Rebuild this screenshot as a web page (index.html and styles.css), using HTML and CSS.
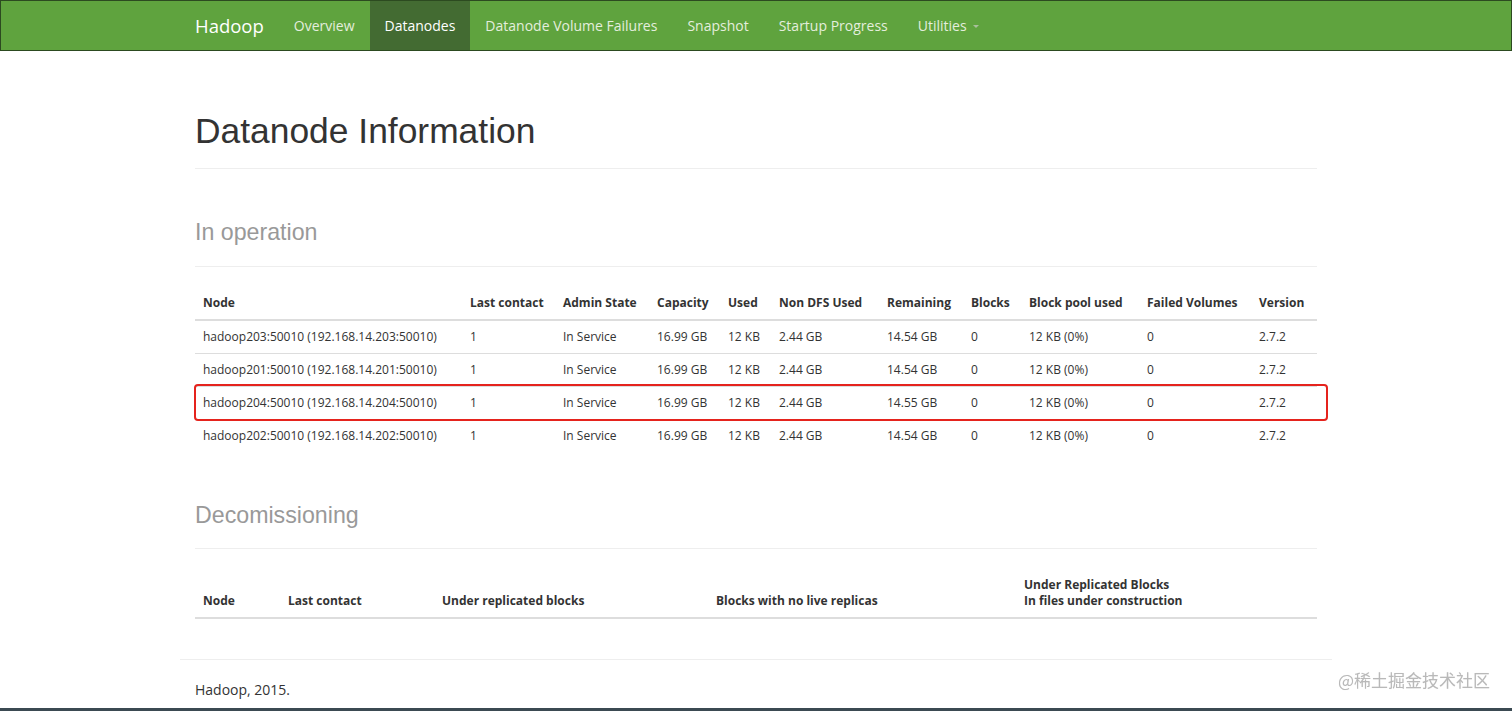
FILE: index.html
```html
<!DOCTYPE html>
<html lang="en">
<head>
<meta charset="utf-8">
<title>Datanode Information</title>
<link rel="stylesheet" href="styles.css">
</head>
<body>
<header class="navbar">
  <div class="container nav-inner">
    <a class="brand" href="#">Hadoop</a>
    <ul class="nav">
      <li><a href="#">Overview</a></li>
      <li class="active"><a href="#">Datanodes</a></li>
      <li><a href="#">Datanode Volume Failures</a></li>
      <li><a href="#">Snapshot</a></li>
      <li><a href="#">Startup Progress</a></li>
      <li><a href="#">Utilities <b class="caret"></b></a></li>
    </ul>
  </div>
</header>

<main class="container main">
  <div class="page-header"><h1>Datanode Information</h1></div>

  <div class="page-header sub"><h1><small>In operation</small></h1></div>
  <div class="table-wrap">
    <table class="table">
      <thead>
        <tr>
          <th class="w-node">Node</th>
          <th class="w-contact">Last contact</th>
          <th class="w-admin">Admin State</th>
          <th class="w-cap">Capacity</th>
          <th class="w-used">Used</th>
          <th class="w-nondfs">Non DFS Used</th>
          <th class="w-rem">Remaining</th>
          <th class="w-blocks">Blocks</th>
          <th class="w-pool">Block pool used</th>
          <th class="w-failed">Failed Volumes</th>
          <th class="w-ver">Version</th>
        </tr>
      </thead>
      <tbody>
        <tr><td>hadoop203:50010 (192.168.14.203:50010)</td><td>1</td><td>In Service</td><td>16.99 GB</td><td>12 KB</td><td>2.44 GB</td><td>14.54 GB</td><td>0</td><td>12 KB (0%)</td><td>0</td><td>2.7.2</td></tr>
        <tr><td>hadoop201:50010 (192.168.14.201:50010)</td><td>1</td><td>In Service</td><td>16.99 GB</td><td>12 KB</td><td>2.44 GB</td><td>14.54 GB</td><td>0</td><td>12 KB (0%)</td><td>0</td><td>2.7.2</td></tr>
        <tr><td>hadoop204:50010 (192.168.14.204:50010)</td><td>1</td><td>In Service</td><td>16.99 GB</td><td>12 KB</td><td>2.44 GB</td><td>14.55 GB</td><td>0</td><td>12 KB (0%)</td><td>0</td><td>2.7.2</td></tr>
        <tr><td>hadoop202:50010 (192.168.14.202:50010)</td><td>1</td><td>In Service</td><td>16.99 GB</td><td>12 KB</td><td>2.44 GB</td><td>14.54 GB</td><td>0</td><td>12 KB (0%)</td><td>0</td><td>2.7.2</td></tr>
      </tbody>
    </table>
    <div class="highlight"></div>
  </div>

  <div class="page-header sub decom"><h1><small>Decomissioning</small></h1></div>
  <table class="table">
    <thead>
      <tr>
        <th class="d-node">Node</th>
        <th class="d-contact">Last contact</th>
        <th class="d-under">Under replicated blocks</th>
        <th class="d-nolive">Blocks with no live replicas</th>
        <th class="d-files">Under Replicated Blocks <br>In files under construction</th>
      </tr>
    </thead>
  </table>

  <div class="footer-row">
    <hr>
    <p class="footer-text">Hadoop, 2015.</p>
  </div>
</main>

<div class="watermark">@稀土掘金技术社区</div>
<div class="frame-edge"></div>
</body>
</html>
```

FILE: styles.css
```css
* { box-sizing: border-box; }

html, body {
  margin: 0;
  padding: 0;
  background: #fff;
}

body {
  font-family: "Open Sans", "Noto Sans", sans-serif;
  font-size: 14px;
  color: #333;
}

.container {
  width: 1152px;
  margin: 0 auto;
  padding: 0 15px;
}

.main {
  padding-top: 18px;
}

/* Navbar */
.navbar {
  background: #5fa33e;
  border: 1px solid #2c4a20;
  height: 51px;
}

.nav-inner {
  display: flex;
  align-items: stretch;
  height: 49px;
}

.brand {
  display: flex;
  align-items: center;
  margin-left: -15px;
  padding: 0 15px;
  font-size: 18.5px;
  color: #fff;
  text-decoration: none;
}

.nav {
  display: flex;
  list-style: none;
  margin: 0;
  padding: 0;
}

.nav li a {
  display: flex;
  align-items: center;
  height: 49px;
  padding: 0 15px;
  font-size: 14px;
  color: #e4eedd;
  text-decoration: none;
}

.nav li.active a {
  background: #436b32;
  color: #fff;
}

.caret {
  display: inline-block;
  width: 0;
  height: 0;
  margin-left: 6px;
  margin-top: 2px;
  border-top: 3px solid #a9bf9c;
  border-left: 3px solid transparent;
  border-right: 3px solid transparent;
}

/* Headers */
.page-header {
  margin: 40px 0 20px;
  padding-bottom: 9px;
  border-bottom: 1px solid #eee;
}

.page-header h1 {
  margin: 0 0 7px;
  padding-top: 3px;
  font-family: "Liberation Sans", Arial, sans-serif;
  font-size: 35.4px;
  font-weight: 400;
  line-height: 39.6px;
  color: #333;
}

.page-header.sub h1 {
  padding-top: 0;
  margin-bottom: 9px;
}

.page-header.decom {
  margin-top: 38px;
}

.page-header.decom h1 {
  padding-top: 2px;
  margin-bottom: 7px;
}

.page-header h1 small {
  font-size: 23.2px;
  line-height: 1;
  color: #999;
  font-weight: 400;
}

/* Tables */
.table-wrap {
  position: relative;
}

.table {
  width: 100%;
  table-layout: fixed;
  border-collapse: collapse;
  margin-bottom: 20px;
  font-size: 12px;
  line-height: 16px;
  color: #333;
}

.table th,
.table td {
  padding: 8px;
  text-align: left;
  vertical-align: top;
  white-space: nowrap;
}

.table th {
  font-weight: 700;
  vertical-align: bottom;
  border-bottom: 2px solid #ddd;
}

.table td {
  border-top: 1px solid #ddd;
}

.w-node { width: 267px; }
.w-contact { width: 93px; }
.w-admin { width: 94px; }
.w-cap { width: 71px; }
.w-used { width: 51px; }
.w-nondfs { width: 108px; }
.w-rem { width: 84px; }
.w-blocks { width: 58px; }
.w-pool { width: 118px; }
.w-failed { width: 112px; }
.w-ver { width: 66px; }

.d-node { width: 85px; }
.d-contact { width: 154px; }
.d-under { width: 274px; }
.d-nolive { width: 308px; }
.d-files { width: 301px; }

.highlight {
  position: absolute;
  left: -1px;
  top: 97px;
  width: 1134px;
  height: 37px;
  border: 2px solid #e5231d;
  border-radius: 4px;
  pointer-events: none;
}

/* Footer */
.footer-row {
  display: flow-root;
  margin: 0 -15px;
}

.footer-row hr {
  margin: 20px 0;
  border: 0;
  border-top: 1px solid #eee;
}

.footer-text {
  margin: 0 0 10px;
  padding: 0 15px;
  font-size: 14px;
  line-height: 20px;
}

/* Overlays */
.watermark {
  position: fixed;
  right: 22px;
  bottom: 19px;
  font-family: "Noto Sans CJK SC", "Noto Sans", sans-serif;
  font-size: 17px;
  color: #b9b9b9;
  text-shadow: 0 0 1px rgba(0,0,0,0.08);
}

.frame-edge {
  position: fixed;
  left: 0;
  right: 0;
  bottom: 0;
  height: 3px;
  background: #3b4a52;
}
```
